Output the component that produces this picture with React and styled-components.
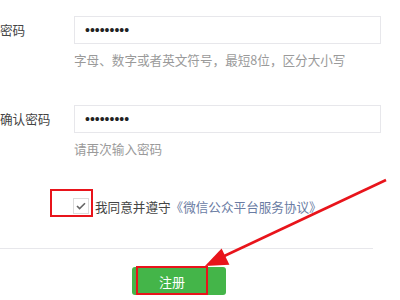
import React from 'react';
import styled, { createGlobalStyle } from 'styled-components';

const GlobalStyle = createGlobalStyle`
	body {
		margin: 0;
		background: #fff;
		font-family: "Microsoft YaHei", "Noto Sans CJK SC", "Liberation Sans", sans-serif;
		overflow: hidden;
	}
`;

const Page = styled.div`
	position: relative;
	width: 400px;
	height: 300px;
	padding-top: 16px;
	box-sizing: border-box;
	font-size: 12.6px;
	color: #444;
`;

const Field = styled.div`
	display: grid;
	grid-template-columns: 74px 307px;
	margin-bottom: ${props => props.gap || 0}px;
`;

const Label = styled.label`
	height: 28px;
	line-height: 28px;
	white-space: nowrap;
`;

const Input = styled.div`
	height: 28px;
	box-sizing: border-box;
	border: 1px solid #e7e7eb;
	display: flex;
	align-items: center;
	padding-left: 10px;
	font-family: "Liberation Sans", sans-serif;
	font-size: 14px;
	color: #222;
	line-height: 1;
`;

const Hint = styled.p`
	grid-column: 2;
	margin: 7px 0 0;
	color: #9a9a9a;
	line-height: 18px;
`;

const Agree = styled.div`
	display: flex;
	align-items: center;
	margin: 40px 0 0 73px;
	height: 16px;
`;

const Check = styled.span`
	width: 14px;
	height: 14px;
	border: 1px solid #dcdcdc;
	display: flex;
	align-items: center;
	justify-content: center;
	margin-right: 6px;
`;

const Link = styled.span`
	color: #6a7ca3;
`;

const Divider = styled.div`
	width: 373px;
	height: 1px;
	background: #e7e7eb;
	margin-top: 34px;
`;

const Actions = styled.div`
	padding: 18px 0 0 132px;
`;

const Button = styled.button`
	display: block;
	width: 94px;
	height: 28px;
	border: none;
	border-radius: 3px;
	background: #44b549;
	color: #fff;
	font: inherit;
	font-size: 13px;
	padding: 0 14px 0 0;
	cursor: pointer;
`;

const Mark = styled.div`
	position: absolute;
	border: 2px solid #e8141b;
	box-sizing: border-box;
	left: ${props => props.x}px;
	top: ${props => props.y}px;
	width: ${props => props.w}px;
	height: ${props => props.h}px;
	pointer-events: none;
`;

const Arrow = styled.svg`
	position: absolute;
	left: 0;
	top: 0;
	pointer-events: none;
`;

const App = () => {
	return (
		<Page>
			<GlobalStyle />
			<Field gap={36}>
				<Label>密码</Label>
				<Input>•••••••••</Input>
				<Hint>字母、数字或者英文符号，最短8位，区分大小写</Hint>
			</Field>
			<Field>
				<Label>确认密码</Label>
				<Input>•••••••••</Input>
				<Hint>请再次输入密码</Hint>
			</Field>
			<Agree>
				<Check>
					<svg width="10" height="8" viewBox="0 0 10 8">
						<path d="M1 4l2.6 2.6L9 1.2" fill="none" stroke="#666" strokeWidth="1.6" />
					</svg>
				</Check>
				我同意并遵守<Link>《微信公众平台服务协议》</Link>
			</Agree>
			<Divider />
			<Actions>
				<Button>注册</Button>
			</Actions>
			<Mark x={50} y={189} w={43} h={28} />
			<Mark x={136} y={266} w={72} h={29} />
			<Arrow width="400" height="300">
				<line x1="386" y1="180" x2="220" y2="258" stroke="#e8141b" strokeWidth="2.5" />
				<polygon points="205,266 221.6,248.4 229.4,264.8" fill="#e8141b" />
			</Arrow>
		</Page>
	);
};

export default App;
